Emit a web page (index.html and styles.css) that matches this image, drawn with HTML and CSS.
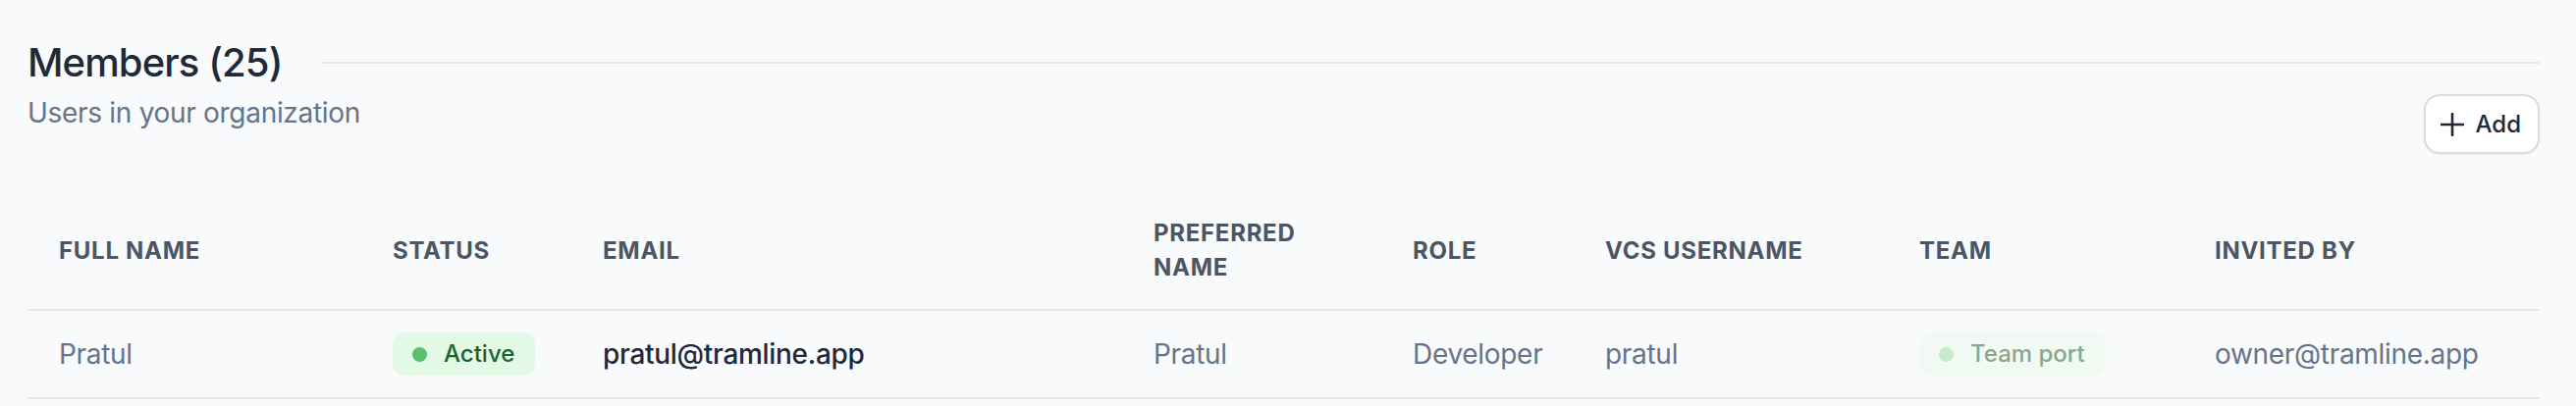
FILE: index.html
```html
<!DOCTYPE html>
<html lang="en">
<head>
<meta charset="utf-8">
<title>Members</title>
<link rel="stylesheet" href="styles.css">
</head>
<body>
<main class="page">
  <section class="section-head">
    <div class="title-row">
      <h2 class="title">Members (25)</h2>
      <div class="rule"></div>
    </div>
    <div class="sub-row">
      <p class="subtitle">Users in your organization</p>
      <button class="btn-add" type="button">
        <svg class="plus" viewBox="0 0 24 24" width="24" height="24" aria-hidden="true"><path d="M12 1v22M1 12h22" fill="none" stroke="currentColor" stroke-width="2.6" stroke-linecap="round"/></svg>
        <span>Add</span>
      </button>
    </div>
  </section>

  <table class="members">
    <colgroup>
      <col class="c-name"><col class="c-status"><col class="c-email"><col class="c-pref">
      <col class="c-role"><col class="c-vcs"><col class="c-team"><col class="c-inv">
    </colgroup>
    <thead>
      <tr>
        <th>Full name</th>
        <th>Status</th>
        <th>Email</th>
        <th>Preferred<br>name</th>
        <th>Role</th>
        <th>VCS username</th>
        <th>Team</th>
        <th>Invited by</th>
      </tr>
    </thead>
    <tbody>
      <tr>
        <td>Pratul</td>
        <td><span class="badge badge-active"><span class="dot"></span>Active</span></td>
        <td class="email">pratul@tramline.app</td>
        <td>Pratul</td>
        <td>Developer</td>
        <td>pratul</td>
        <td><span class="badge badge-team"><span class="dot"></span>Team port</span></td>
        <td>owner@tramline.app</td>
      </tr>
    </tbody>
  </table>
</main>
</body>
</html>
```

FILE: styles.css
```css
* { box-sizing: border-box; }

html, body {
  margin: 0;
  padding: 0;
  background: #f9fafb;
  font-family: Inter, "Noto Sans", "Liberation Sans", sans-serif;
  color: #1e293b;
}

.page {
  padding: 36px 37px 0 28px;
}

.title-row {
  display: flex;
  align-items: center;
  gap: 40px;
  height: 56px;
}

.title {
  margin: 0;
  font-size: 40px;
  line-height: 56px;
  font-weight: 500;
  color: #1f2937;
  letter-spacing: -0.9px;
}

.rule {
  flex: 1;
  height: 2px;
  background: #e5e7eb;
}

.sub-row {
  display: flex;
  justify-content: space-between;
  align-items: flex-start;
  margin-top: 3px;
}

.subtitle {
  margin: 0;
  font-size: 28px;
  line-height: 40px;
  color: #64748b;
  letter-spacing: -0.3px;
}

.btn-add {
  display: inline-flex;
  align-items: center;
  gap: 12px;
  margin-top: 1px;
  height: 61px;
  padding: 0 17px 0 15px;
  background: #ffffff;
  border: 2px solid #d8dbe1;
  border-radius: 16px;
  box-shadow: 0 1px 2px rgba(15, 23, 42, 0.06);
  font-family: inherit;
  font-size: 24px;
  font-weight: 500;
  color: #1f2937;
}

.plus { display: block; color: #1f2937; }

.members {
  width: 100%;
  margin-top: 40px;
  border-collapse: collapse;
  table-layout: fixed;
}

.c-name { width: 340px; }
.c-status { width: 214px; }
.c-email { width: 561px; }
.c-pref { width: 264px; }
.c-role { width: 196px; }
.c-vcs { width: 320px; }
.c-team { width: 301px; }
.c-inv { width: 363px; }

.members th {
  padding: 23px 32px 25px;
  text-align: left;
  vertical-align: middle;
  font-size: 24px;
  line-height: 35px;
  font-weight: 700;
  text-transform: uppercase;
  letter-spacing: 0.03em;
  color: #4b5563;
  border-bottom: 2px solid #e5e7eb;
}

.members td {
  padding: 22px 32px;
  vertical-align: middle;
  font-size: 28px;
  line-height: 40px;
  color: #64748b;
  letter-spacing: -0.3px;
  border-bottom: 2px solid #e5e7eb;
  white-space: nowrap;
}

.members td.email {
  color: #1e293b;
  font-weight: 500;
}

.badge {
  display: inline-flex;
  align-items: center;
  gap: 17px;
  height: 44px;
  padding: 0 21px 0 20px;
  border-radius: 12px;
  font-size: 24px;
  font-weight: 500;
  letter-spacing: 0;
  vertical-align: middle;
}

.dot {
  width: 15px;
  height: 15px;
  border-radius: 50%;
}

.badge-active { background: #e2f9e6; color: #1d6331; }
.badge-active .dot { background: #5cc06a; }

.badge-team { background: #f1faf2; color: #89a88a; }
.badge-team .dot { background: #c6ebcb; }
```
